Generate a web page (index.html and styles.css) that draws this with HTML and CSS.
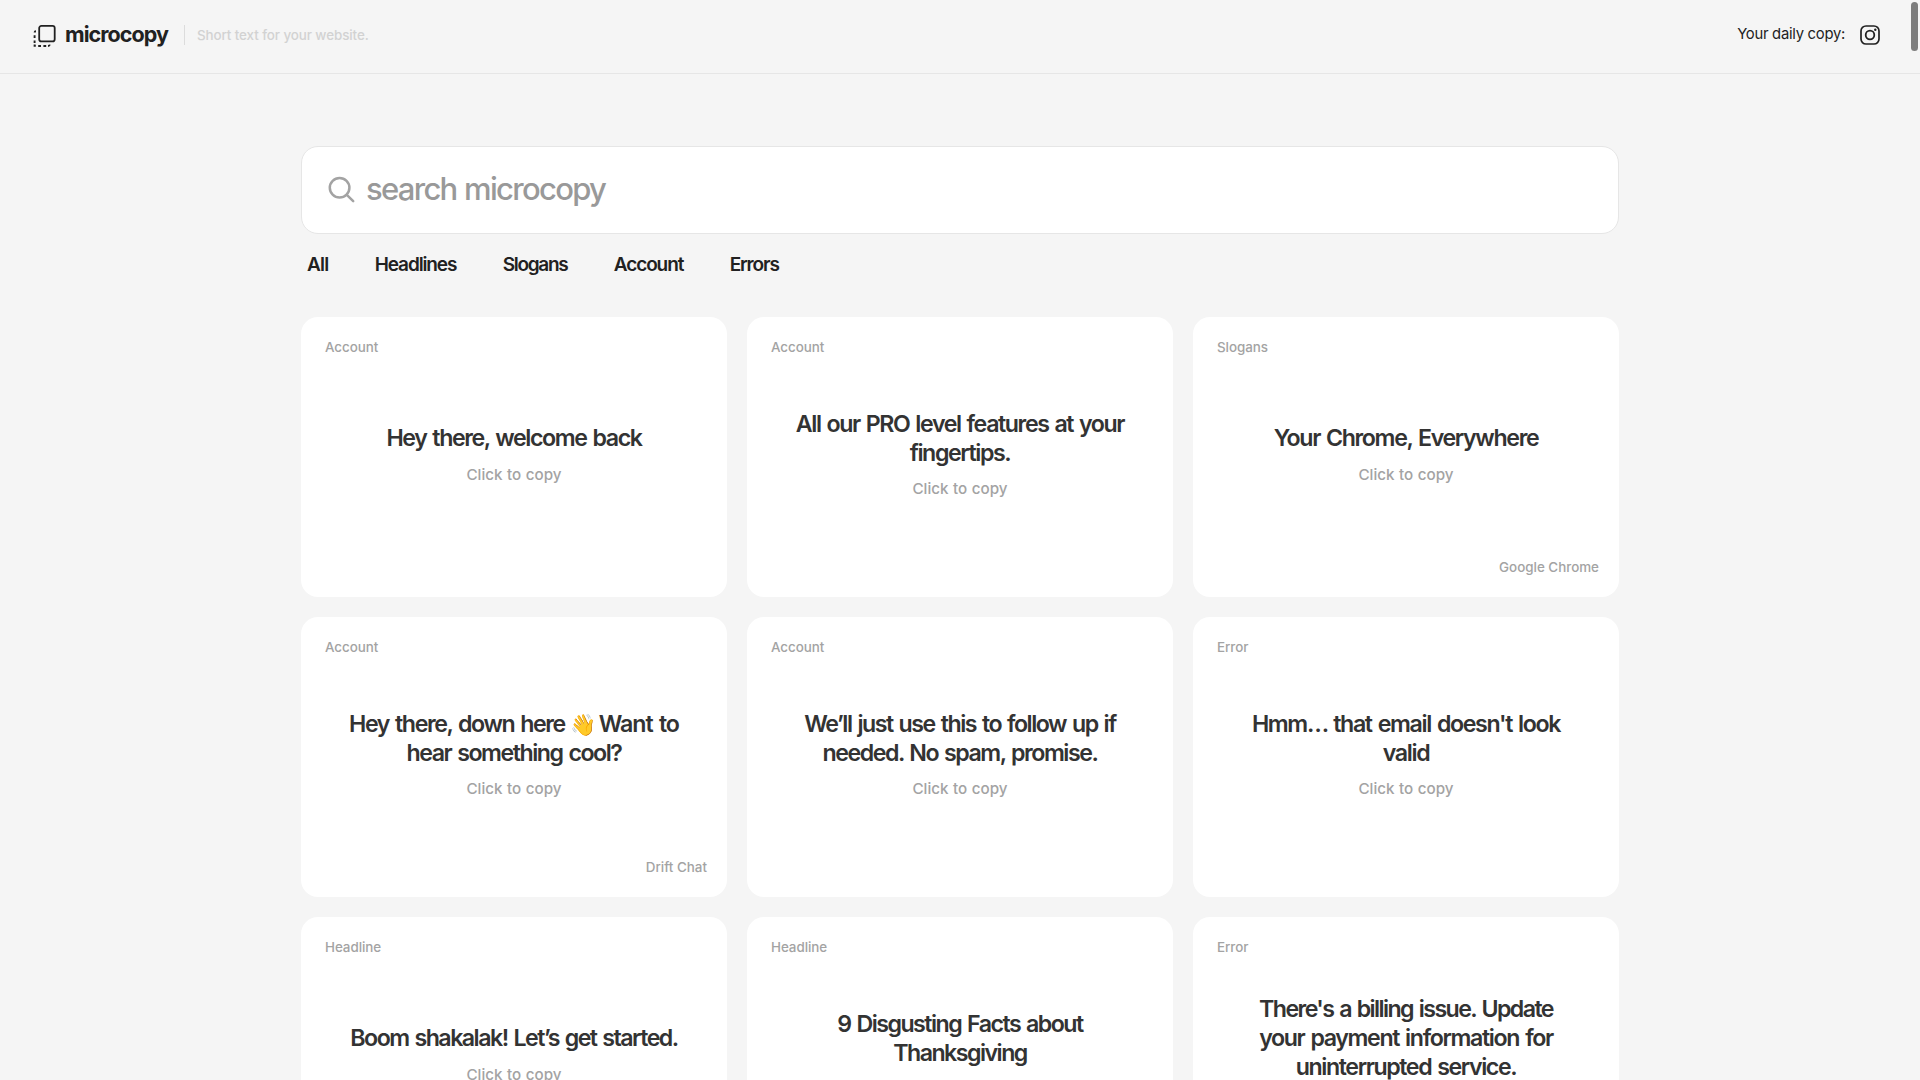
FILE: index.html
```html
<!DOCTYPE html>
<html lang="en">
<head>
<meta charset="utf-8">
<title>microcopy</title>
<link rel="stylesheet" href="styles.css">
</head>
<body>
<header class="header">
  <a class="brand">
    <svg class="brand-icon" width="24" height="24" viewBox="0 0 24 24" fill="none" stroke="#212121">
      <rect x="7.2" y="1.9" width="15.5" height="15.5" rx="2.2" stroke-width="1.8"/>
      <path d="M4 7.2c-1 0-1.4.4-1.4 1.4M2.6 11.2v2.8M2.6 16.6v2.4M2.6 20.6v1.2h1.2M6.2 22h2.8M11.4 22h2.8M16 22c1 0 1.6-.4 1.8-1.4" stroke-width="1.9"/>
    </svg>
    <span class="brand-name">microcopy</span>
  </a>
  <span class="tagline">Short text for your website.</span>
  <span class="daily">Your daily copy:</span>
  <svg class="instagram" width="20" height="20" viewBox="0 0 20 20" fill="none" stroke="#212121">
    <rect x="1" y="1" width="18" height="18" rx="5" stroke-width="1.7"/>
    <circle cx="10" cy="10" r="4.3" stroke-width="1.8"/>
    <circle cx="15.3" cy="4.8" r="1.2" fill="#212121" stroke="none"/>
  </svg>
</header>
<main class="main">
  <div class="search">
    <svg width="28" height="28" viewBox="0 0 28 28" fill="none" stroke="#a3a3a3" stroke-width="2.5" stroke-linecap="round">
      <circle cx="11.6" cy="11.7" r="9.8"/><path d="M18.8 18.8l6.4 6.4"/>
    </svg>
    <span class="placeholder">search microcopy</span>
  </div>
  <nav class="filters">
    <a class="wide">All</a><a>Headlines</a><a class="narrow">Slogans</a><a>Account</a><a>Errors</a>
  </nav>
  <section class="grid">
    <article class="card">
      <span class="category">Account</span>
      <div class="copy"><h2>Hey there, welcome back</h2><p>Click to copy</p></div>
    </article>
    <article class="card">
      <span class="category">Account</span>
      <div class="copy"><h2>All our PRO level features at your<br>fingertips.</h2><p>Click to copy</p></div>
    </article>
    <article class="card">
      <span class="category">Slogans</span>
      <div class="copy"><h2 class="loose">Your Chrome, Everywhere</h2><p>Click to copy</p></div>
      <span class="source">Google Chrome</span>
    </article>
    <article class="card">
      <span class="category">Account</span>
      <div class="copy"><h2>Hey there, down here <span class="emoji">👋</span><span class="after-emoji">Want to</span><br><span class="snug">hear something cool?</span></h2><p>Click to copy</p></div>
      <span class="source">Drift Chat</span>
    </article>
    <article class="card">
      <span class="category">Account</span>
      <div class="copy"><h2 class="snug">We’ll just use this to follow up if<br>needed. No spam, promise.</h2><p>Click to copy</p></div>
    </article>
    <article class="card">
      <span class="category">Error</span>
      <div class="copy"><h2 class="loose">Hmm… that email doesn't look<br>valid</h2><p>Click to copy</p></div>
    </article>
    <article class="card">
      <span class="category">Headline</span>
      <div class="copy"><h2 class="tight">Boom shakalak! Let’s get started.</h2><p>Click to copy</p></div>
    </article>
    <article class="card">
      <span class="category">Headline</span>
      <div class="copy"><h2 class="tight">9 Disgusting Facts about<br>Thanksgiving</h2><p>Click to copy</p></div>
    </article>
    <article class="card">
      <span class="category">Error</span>
      <div class="copy"><h2><span class="tightest">There's a billing issue. Update</span><br><span class="loose">your payment information for</span><br>uninterrupted service.</h2><p>Click to copy</p></div>
    </article>
  </section>
</main>
<div class="scroll-thumb"></div>
</body>
</html>
```
FILE: styles.css
```css
* { box-sizing: border-box; margin: 0; padding: 0; }
html, body { height: 100%; overflow: hidden; }
body {
  background: #f5f5f5;
  color: #212121;
  font-family: Inter, "Liberation Sans", sans-serif;
  font-weight: 500;
}
.header {
  height: 74px;
  padding: 0 40px 4px 32px;
  display: flex;
  align-items: center;
  border-bottom: 1px solid #e6e6e6;
}
.brand {
  display: flex;
  align-items: center;
  gap: 9px;
  height: 20px;
  padding-right: 16px;
  border-right: 1px solid #dcdcdc;
}
.brand-icon { margin-top: 2px; }
.brand-name {
  font-size: 21.5px;
  font-weight: 700;
  letter-spacing: -.95px;
  line-height: 26px;
  margin-top: -1px;
}
.tagline {
  margin: 1px auto 0 12px;
  color: #d2d2d2;
  font-size: 13.4px;
  letter-spacing: -.08px;
}
.daily {
  margin-right: 15px;
  font-size: 14.8px;
  font-weight: 400;
  letter-spacing: -.26px;
  margin-top: -2px;
}
.main { width: 1318px; margin: 72px auto 0; }
.search {
  display: flex;
  align-items: center;
  gap: 10px;
  height: 88px;
  padding-left: 26px;
  background: #fff;
  border: 1px solid #e6e6e6;
  border-radius: 17px;
}
.placeholder {
  color: #999;
  font-size: 31px;
  letter-spacing: -1.7px;
  word-spacing: 1px;
  line-height: 40px;
  margin-top: -3px;
}
.filters {
  display: flex;
  gap: 46.4px;
  height: 83px;
  padding: 19px 0 0 6px;
  font-size: 19px;
  font-weight: 600;
  line-height: 24px;
  letter-spacing: -1.12px;
}
.filters .wide { letter-spacing: -.8px; }
.filters .narrow { letter-spacing: -1.28px; }
.grid {
  display: grid;
  grid-template-columns: repeat(3, 426px);
  grid-auto-rows: 280px;
  gap: 20px;
}
.card {
  display: grid;
  grid-template-rows: 48px 1fr 48px;
  background: #fff;
  border-radius: 17px;
  color: #a3a3a3;
}
.category, .source { font-size: 13.4px; line-height: 18px; }
.category { padding: 21px 0 0 24px; letter-spacing: -.05px; }
.source { justify-self: end; padding: 9px 20px 0 0; }
.copy {
  display: flex;
  flex-direction: column;
  justify-content: center;
  padding-top: 1px;
  text-align: center;
}
.copy h2 {
  color: #333;
  font-size: 23.2px;
  font-weight: 600;
  line-height: 29px;
  letter-spacing: -1.41px;
  word-spacing: 1.5px;
}
.copy p {
  height: 38px;
  padding-top: 11.5px;
  font-size: 15.2px;
  line-height: 20px;
  word-spacing: .5px;
}
.copy .loose { letter-spacing: -1.36px; }
.copy .snug { letter-spacing: -1.47px; }
.copy .tight { letter-spacing: -1.52px; }
.copy .tightest { letter-spacing: -1.58px; }
.copy .emoji { display: inline-block; width: 26px; margin: 0 3px 0 -1px; font-size: 21px; letter-spacing: 0; line-height: 24px; }
.copy .after-emoji { letter-spacing: -1.05px; }
.scroll-thumb {
  position: fixed;
  top: 2px;
  right: 2px;
  width: 7px;
  height: 49px;
  border-radius: 4px;
  background: #7d7d7d;
}
```
